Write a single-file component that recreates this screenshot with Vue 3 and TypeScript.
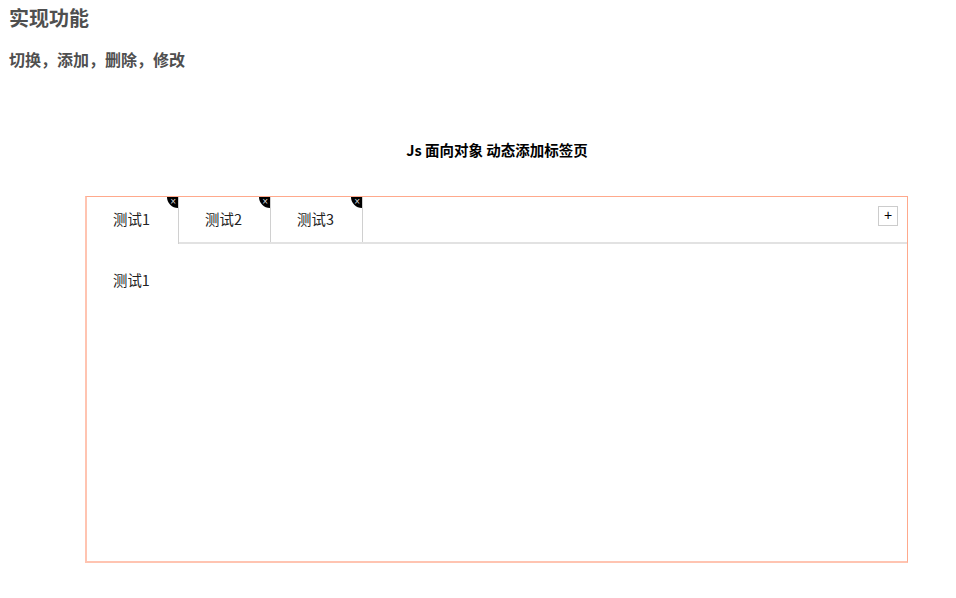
<script setup lang="ts">
const tabs = ['测试1', '测试2', '测试3']
</script>

<template>
  <div class="page">
    <h3 class="heading">实现功能</h3>
    <h4 class="sub">切换，添加，删除，修改</h4>
    <h4 class="title">Js 面向对象 动态添加标签页</h4>
    <div class="tabbox">
      <nav class="tabnav">
        <ul class="tablist">
          <li v-for="(tab, i) in tabs" :key="tab" class="tab" :class="{ active: i === 0 }">
            <span>{{ tab }}</span>
            <span class="close">×</span>
          </li>
        </ul>
        <div class="add">+</div>
      </nav>
      <section class="panel">测试1</section>
    </div>
  </div>
</template>

<style scoped>
.page {
  height: 598px;
  overflow: hidden;
  font-family: "Noto Sans CJK SC", "Liberation Sans", sans-serif;
  color: #000;
}
.heading {
  margin: 0;
  padding: 5px 0 0 9px;
  font-size: 20px;
  line-height: 26px;
  font-weight: 700;
  color: #4f4f4f;
}
.sub {
  margin: 0;
  padding: 17px 0 0 9px;
  font-size: 16px;
  line-height: 22px;
  font-weight: 700;
  color: #4f4f4f;
}
.title {
  margin: 0;
  padding-top: 70px;
  padding-left: 38px;
  text-align: center;
  font-size: 14.5px;
  line-height: 20px;
  font-weight: 700;
}
.tabbox {
  box-sizing: border-box;
  width: 823px;
  height: 367px;
  margin: 36px 0 0 85px;
  border-style: solid;
  border-color: #ffa98c #ffa98c #ffc4b1 #ffc4b1;
  border-width: 1px 1px 2px 2px;
}
.tabnav {
  display: flex;
  justify-content: space-between;
  height: 47px;
  box-sizing: border-box;
  border-bottom: 2px solid #e2e2e2;
}
.tablist {
  display: flex;
  margin: 0;
  padding: 0;
  list-style: none;
}
.tab {
  position: relative;
  box-sizing: border-box;
  width: 92px;
  height: 45px;
  padding-right: 2px;
  border-right: 1px solid #d0d0d0;
  font-size: 14.4px;
  line-height: 43px;
  text-align: center;
  color: #222;
}
.tab.active {
  height: 47px;
  background: #fff;
}
.close {
  position: absolute;
  top: 0;
  right: 0;
  width: 11px;
  height: 11px;
  background: #000;
  border-bottom-left-radius: 11px;
  color: #ddd;
  font-family: "Liberation Sans", sans-serif;
  font-size: 10px;
  line-height: 9px;
  text-align: right;
  padding-right: 2px;
  box-sizing: border-box;
}
.add {
  box-sizing: border-box;
  width: 20px;
  height: 20px;
  margin: 9px 9px 0 0;
  border: 1px solid #ccc;
  font-family: "Liberation Sans", sans-serif;
  font-size: 14px;
  line-height: 17px;
  text-align: center;
}
.panel {
  padding: 26px 0 0 26px;
  font-size: 14.4px;
  line-height: 20px;
  color: #222;
}
</style>
